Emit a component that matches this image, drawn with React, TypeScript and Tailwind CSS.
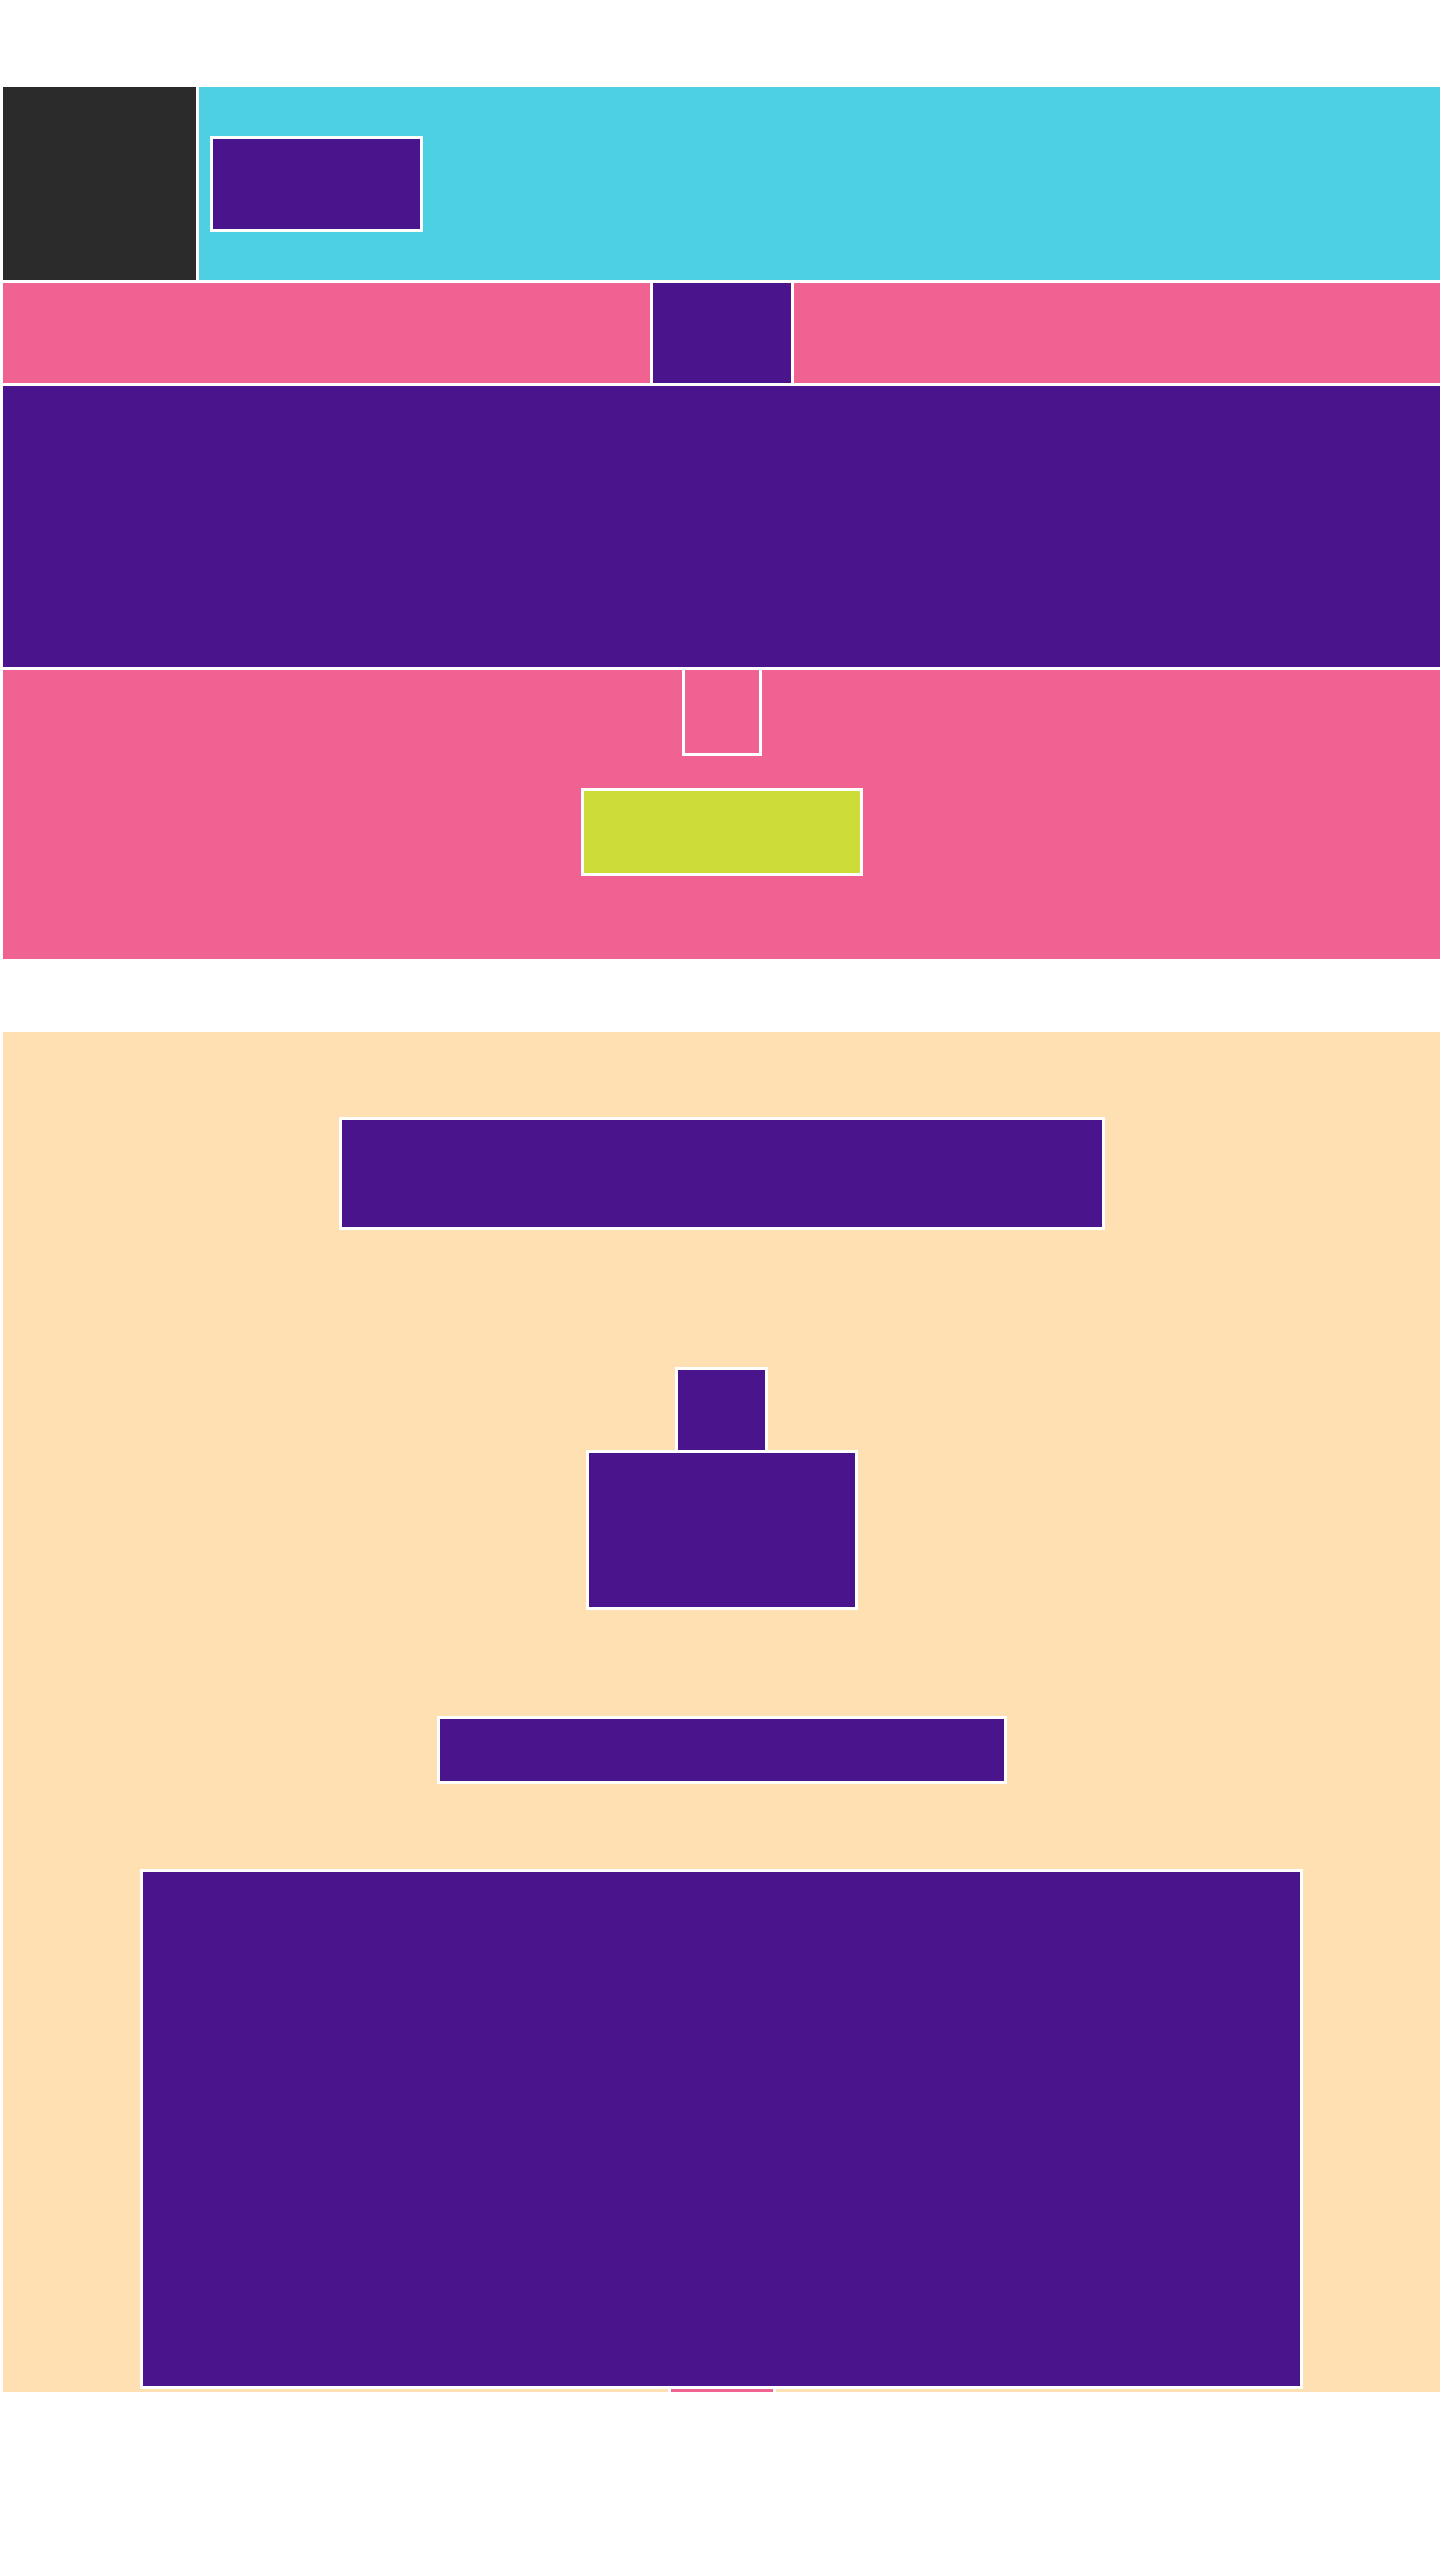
export default function App() {
  return (
    <main className="min-h-[2560px] w-full bg-white pt-[87px] pl-[3px]">
      <div className="flex flex-col gap-[3px]">
        {/* header */}
        <header className="flex h-[193px] gap-[3px]">
          <div className="w-[193px] bg-[#2b2b2b]" />
          <div className="flex flex-1 items-center bg-[#4dd0e1] pl-[11px]">
            <div className="h-[96px] w-[213px] border-[3px] border-white bg-[#4a148c]" />
          </div>
        </header>

        {/* nav */}
        <nav className="flex h-[100px] justify-center bg-[#f06292]">
          <div className="w-[144px] border-x-[3px] border-white bg-[#4a148c]" />
        </nav>

        {/* hero */}
        <section className="h-[281px] bg-[#4a148c]" />

        <section className="flex h-[289px] flex-col items-center bg-[#f06292]">
          <div className="h-[86px] w-[80px] border-x-[3px] border-b-[3px] border-white" />
          <div className="mt-[32px] h-[88px] w-[282px] border-[3px] border-white bg-[#cddc39]" />
        </section>

        {/* content */}
        <section className="mt-[70px] flex h-[1360px] flex-col items-center overflow-hidden bg-[#ffe0b2]">
          <div className="mt-[85px] h-[113px] w-[766px] shrink-0 border-[3px] border-white bg-[#4a148c]" />
          <div className="mt-[137px] h-[86px] w-[93px] shrink-0 border-[3px] border-white bg-[#4a148c]" />
          <div className="-mt-[3px] h-[160px] w-[272px] shrink-0 border-[3px] border-white bg-[#4a148c]" />
          <div className="mt-[106px] h-[68px] w-[570px] shrink-0 border-[3px] border-white bg-[#4a148c]" />
          <div className="mt-[85px] h-[520px] w-[1163px] shrink-0 border-[3px] border-white bg-[#4a148c]" />
          <div className="h-[40px] w-[108px] shrink-0 border-x-[3px] border-white bg-[#f06292]" />
        </section>
      </div>
    </main>
  )
}
